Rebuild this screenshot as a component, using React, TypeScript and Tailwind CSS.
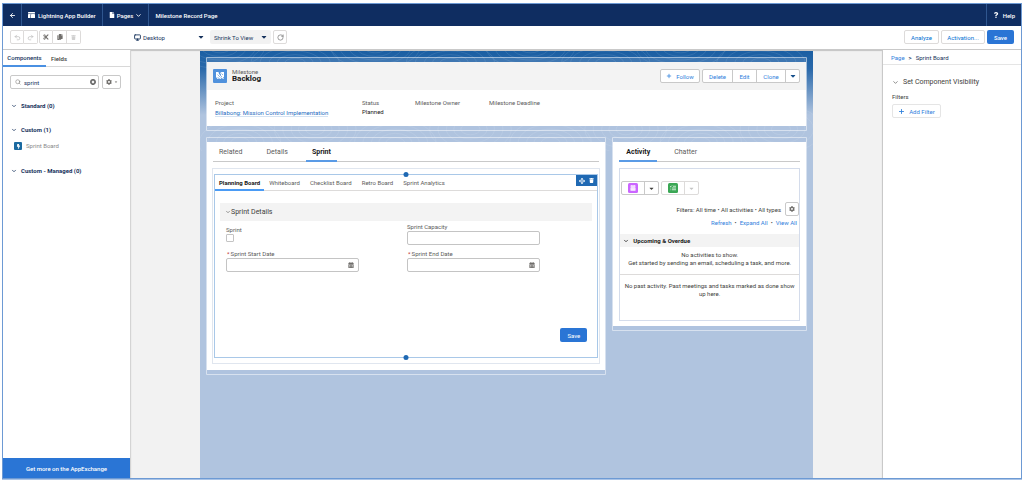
import type { ReactNode } from "react";
import {
  ArrowLeft,
  ChevronDown,
  Monitor,
  Plus,
  Redo2,
  RotateCw,
  Search,
  Undo2,
} from "lucide-react";
import {
  FaArrowsAlt,
  FaBolt,
  FaCalendarAlt,
  FaCaretDown,
  FaCog,
  FaCopy,
  FaCut,
  FaFile,
  FaQuestion,
  FaTimesCircle,
  FaTrash,
} from "react-icons/fa";

function LayoutIcon() {
  return (
    <svg viewBox="0 0 14 12" className="h-[6px] w-[7px]" fill="currentColor" aria-hidden="true">
      <rect x="0" y="0" width="14" height="3" rx="0.5" />
      <rect x="0" y="4" width="5" height="8" rx="0.5" />
      <rect x="6" y="4" width="8" height="8" rx="0.5" />
    </svg>
  );
}

function MilestoneIcon() {
  return (
    <svg viewBox="0 0 28 28" className="size-[14px] shrink-0" aria-hidden="true">
      <rect width="28" height="28" rx="2" fill="#5091dc" />
      <path
        d="M6 6h5l1 4 3 3 1-2-2-3 3-2h5v10l-2 1 2 2-2 1-3-3-1 3-4-1-3 1-3-4z"
        fill="#fff"
      />
      <path
        d="M9 11l6 6M17 9l3 3M9 16l3 3M14 12l4 4"
        fill="none"
        stroke="#5091dc"
        strokeWidth="1.3"
      />
    </svg>
  );
}

function EventIcon() {
  return (
    <svg viewBox="0 0 20 20" className="size-[10px]" aria-hidden="true">
      <rect width="20" height="20" rx="3" fill="#cb65ff" />
      <path d="M5 5h2V4h1.500v1h3V4H13v1h2v2.500H5z" fill="#fff" />
      <rect x="5" y="8.500" width="10" height="7" rx="1" fill="#fff" />
      <path d="M7 11h6M7 13.500h6" stroke="#cb65ff" strokeWidth="0.8" strokeDasharray="1.500 1" />
    </svg>
  );
}

function TaskIcon() {
  return (
    <svg viewBox="0 0 20 20" className="size-[10px]" aria-hidden="true">
      <rect width="20" height="20" rx="3" fill="#3ba755" />
      <path
        d="M4 6l1.500 1.500L8 5M10 6.500h6M8 10h8M8 13.500h8M5 10h1.500M5 13.500h1.500"
        fill="none"
        stroke="#fff"
        strokeWidth="1.500"
      />
    </svg>
  );
}

function Contours() {
  const centers = [20, 95, 175, 250, 330, 405, 480, 560];
  return (
    <svg
      viewBox="0 0 612 100"
      preserveAspectRatio="xMidYMin slice"
      className="absolute inset-x-0 top-0 h-[100px] w-full"
      fill="none"
      stroke="#fff"
      strokeOpacity="0.16"
      strokeWidth="0.6"
      aria-hidden="true"
    >
      {centers.map((c, i) =>
        [8, 14, 20, 27, 34].map((r) => (
          <g key={`${c}-${r}`}>
            <ellipse cx={c} cy={i % 2 ? 12 : -3} rx={r * 1.3} ry={r * 0.6} />
            <ellipse cx={c + 20} cy={i % 2 ? 78 : 92} rx={r * 1.2} ry={r * 0.7} />
          </g>
        )),
      )}
    </svg>
  );
}

function Region({ children, className = "" }: { children: ReactNode; className?: string }) {
  return (
    <section className={`rounded-[1px] border border-white/50 bg-[#b0c4df]/20 py-[4px] ${className}`}>
      <div className="bg-white">{children}</div>
    </section>
  );
}

function ToolButton({
  label,
  children,
  className = "",
  disabled = false,
}: {
  label: string;
  children: ReactNode;
  className?: string;
  disabled?: boolean;
}) {
  return (
    <button
      aria-label={label}
      disabled={disabled}
      className={`flex h-[14px] w-[14px] items-center justify-center border border-[#dddbda] bg-white ${className}`}
    >
      {children}
    </button>
  );
}

function Field({
  id,
  label,
  required = false,
  date = false,
}: {
  id: string;
  label: string;
  required?: boolean;
  date?: boolean;
}) {
  return (
    <div className="w-[133px]">
      <label htmlFor={id} className="flex gap-px leading-[8px] text-[#5c5c5c]">
        {required && <span className="pl-px text-[#c23934]">*</span>}
        {label}
      </label>
      <div className="relative">
        <input
          id={id}
          type="text"
          className="block h-[14px] w-full rounded-[2px] border border-[#c4c4c4] bg-white px-[4px] outline-none"
        />
        {date && (
          <button
            aria-label={`Pick ${label}`}
            className="absolute right-[5px] top-[4px] text-[#706e6b]"
          >
            <FaCalendarAlt size={6} />
          </button>
        )}
      </div>
    </div>
  );
}

function PaletteHeading({ children }: { children: ReactNode }) {
  return (
    <h2>
      <button className="flex items-center gap-[4px] font-bold leading-[8px] text-[#16325c]">
        <ChevronDown size={6} strokeWidth={3} />
        {children}
      </button>
    </h2>
  );
}

function Header() {
  return (
    <header className="flex h-[22px] items-stretch bg-[#0f2d61] font-medium text-white">
      <button aria-label="Back" className="flex w-[19px] items-center justify-center border-r border-[#2f568f]">
        <ArrowLeft size={7} strokeWidth={3} />
      </button>
      <a href="#builder" className="flex items-center gap-[3px] border-r border-[#2f568f] px-[6px]">
        <LayoutIcon />
        Lightning App Builder
      </a>
      <button className="flex items-center gap-[2px] border-r border-[#2f568f] px-[6px]">
        <FaFile size={6} />
        Pages
        <ChevronDown size={7} strokeWidth={3} />
      </button>
      <h1 className="flex items-center px-[6px]">Milestone Record Page</h1>
      <a href="#help" className="ml-auto flex items-center gap-[4px] border-l border-[#2f568f] px-[6px]">
        <FaQuestion size={6} />
        Help
      </a>
    </header>
  );
}

function Toolbar() {
  return (
    <div className="flex items-center border-b border-[#c9c9c9] bg-white px-[7px] pb-[5px] pt-[4px] text-[#16325c]">
      <div className="flex">
        <ToolButton label="Undo" disabled className="rounded-l-[2px] text-[#b0b0b0]">
          <Undo2 size={7} />
        </ToolButton>
        <ToolButton label="Redo" disabled className="rounded-r-[2px] border-l-0 text-[#b0b0b0]">
          <Redo2 size={7} />
        </ToolButton>
      </div>
      <div className="ml-px flex">
        <ToolButton label="Cut" className="rounded-l-[2px] border-[#c4c4c4] text-[#706e6b]">
          <FaCut size={6} />
        </ToolButton>
        <ToolButton label="Copy" className="border-l-0 border-[#c4c4c4] text-[#706e6b]">
          <FaCopy size={6} />
        </ToolButton>
        <ToolButton label="Delete" disabled className="rounded-r-[2px] border-l-0 text-[#d0d0d0]">
          <FaTrash size={5} />
        </ToolButton>
      </div>
      <div className="relative ml-[50px] flex w-[77px] items-center">
        <Monitor size={7} strokeWidth={3} className="pointer-events-none absolute left-[3px]" />
        <select
          aria-label="Form factor"
          className="h-[14px] w-full appearance-none bg-transparent pl-[12px] outline-none"
        >
          <option>Desktop</option>
        </select>
        <FaCaretDown size={8} className="pointer-events-none absolute right-[3px]" />
      </div>
      <div className="relative ml-[2px] flex w-[61px] items-center">
        <select
          aria-label="Zoom"
          className="h-[14px] w-full appearance-none rounded-[2px] bg-[#f2f2f2] pl-[4px] outline-none"
        >
          <option>Shrink To View</option>
        </select>
        <FaCaretDown size={8} className="pointer-events-none absolute right-[3px]" />
      </div>
      <ToolButton label="Refresh" className="ml-[2px] rounded-[2px] text-[#5c5c5c]">
        <RotateCw size={7} />
      </ToolButton>
      <div className="ml-auto flex gap-[2px] text-[#0070d2]">
        <button className="h-[14px] w-[35px] rounded-[2px] border border-[#dddbda]">Analyze</button>
        <button className="h-[14px] w-[44px] rounded-[2px] border border-[#dddbda]">Activation...</button>
        <button className="h-[14px] w-[27px] rounded-[2px] bg-[#2a75d5] font-medium text-white">Save</button>
      </div>
    </div>
  );
}

function Palette() {
  return (
    <aside className="flex w-[128px] shrink-0 flex-col border-r border-[#d4d4d4] bg-white">
      <nav className="flex h-[17px] border-b border-[#d8d8d8] font-medium text-[#3e3e3c]">
        <button className="-mb-px w-[43px] border-b-2 border-[#4a90e2] text-[#16325c]">Components</button>
        <button className="px-[5px]">Fields</button>
      </nav>
      <div className="flex gap-[3px] px-[7px] pt-[8px]">
        <div className="relative flex w-[89px] items-center">
          <Search size={6} className="absolute left-[5px] text-[#706e6b]" />
          <input
            aria-label="Search components"
            defaultValue="sprint"
            className="h-[14px] w-full rounded-[2px] border border-[#c9c9c9] pl-[13px] text-[#16325c] outline-none"
          />
          <button aria-label="Clear search" className="absolute right-[3px] text-[#5c5c5c]">
            <FaTimesCircle size={6} />
          </button>
        </div>
        <button
          aria-label="Settings"
          className="flex h-[14px] w-[19px] items-center justify-center gap-[2px] rounded-[2px] border border-[#c9c9c9] text-[#706e6b]"
        >
          <FaCog size={6} />
          <FaCaretDown size={4} />
        </button>
      </div>
      <div className="flex flex-col px-[8px] pt-[13px]">
        <PaletteHeading>Standard (0)</PaletteHeading>
        <div className="pb-[17px] pt-[16px]">
          <PaletteHeading>Custom (1)</PaletteHeading>
          <button className="mt-[8px] flex items-center gap-[4px] px-[3px] leading-[8px] text-[#8a8a8a]">
            <span className="flex size-[8px] items-center justify-center rounded-[1px] bg-[#1b6aa0] text-white">
              <FaBolt size={5} />
            </span>
            Sprint Board
          </button>
        </div>
        <PaletteHeading>Custom - Managed (0)</PaletteHeading>
      </div>
      <button className="mt-auto h-[20px] bg-[#2a75d5] font-medium text-white">
        Get more on the AppExchange
      </button>
    </aside>
  );
}

function RecordHeader() {
  return (
    <Region>
      <div className="flex h-[28px] items-center gap-[5px] bg-[#f3f3f3] px-[6px]">
        <MilestoneIcon />
        <div>
          <p className="leading-[6px] text-[#5c5c5c]">Milestone</p>
          <h2 className="text-[8px] font-bold leading-[8px] text-[#181818]">Backlog</h2>
        </div>
        <div className="ml-auto flex gap-[2px] text-[#2f80dc]">
          <button className="flex h-[14px] w-[40px] items-center justify-center gap-[4px] rounded-[2px] border border-[#c9c9c9] bg-white">
            <Plus size={6} strokeWidth={3} />
            Follow
          </button>
          <div className="flex h-[14px] divide-x divide-[#c9c9c9] rounded-[2px] border border-[#c9c9c9] bg-white">
            <button className="w-[30px]">Delete</button>
            <button className="w-[24px]">Edit</button>
            <button className="w-[29px]">Clone</button>
            <button aria-label="More actions" className="flex w-[13px] items-center justify-center text-[#16508c]">
              <FaCaretDown size={8} />
            </button>
          </div>
        </div>
      </div>
      <dl className="flex h-[36px] pl-[8px] pt-[9px] leading-[8px] text-[#5c5c5c]">
        <div className="w-[147px]">
          <dt>Project</dt>
          <dd className="mt-[2px]">
            <a href="#project" className="border-b border-[#d5e3f3] text-[#1f6dc2]">
              Billabong: Mission Control Implementation
            </a>
          </dd>
        </div>
        <div className="w-[53px]">
          <dt>Status</dt>
          <dd className="mt-px text-[#181818]">Planned</dd>
        </div>
        <div className="w-[74px]">
          <dt>Milestone Owner</dt>
        </div>
        <div>
          <dt>Milestone Deadline</dt>
        </div>
      </dl>
    </Region>
  );
}

function SprintBoard() {
  return (
    <div className="relative border border-[#a9c8e8]">
      <span className="absolute left-1/2 top-[-3px] size-[5px] -translate-x-1/2 rounded-full bg-[#1f69b3]" />
      <span className="absolute bottom-[-3px] left-1/2 size-[5px] -translate-x-1/2 rounded-full bg-[#1f69b3]" />
      <div className="absolute right-0 top-0 flex h-[11px] w-[21px] items-center justify-center gap-[4px] bg-[#1f69b3] text-white">
        <button aria-label="Move component">
          <FaArrowsAlt size={6} />
        </button>
        <button aria-label="Delete component">
          <FaTrash size={5} />
        </button>
      </div>
      <nav className="flex h-[16px] border-b border-[#dddbda] text-[#5c5c5c]">
        <button className="-mb-px border-b-2 border-[#4a9bf5] px-[4px] font-bold text-[#181818]">
          Planning Board
        </button>
        <button className="px-[5px]">Whiteboard</button>
        <button className="px-[5px]">Checklist Board</button>
        <button className="px-[5px]">Retro Board</button>
        <button className="px-[5px]">Sprint Analytics</button>
      </nav>
      <form className="px-[5px] pb-[15px] pt-[12px]" onSubmit={(e) => e.preventDefault()}>
        <h3 className="flex h-[18px] items-center bg-[#f3f3f3] px-[5px] text-[7px] text-[#3e3e3c]">
          <ChevronDown size={6} />
          Sprint Details
        </h3>
        <div className="flex gap-[48px] px-[6px] pt-[2px]">
          <div className="flex w-[133px] flex-col items-start pt-[3px]">
            <label htmlFor="sprint" className="leading-[8px] text-[#5c5c5c]">
              Sprint
            </label>
            <input
              id="sprint"
              type="checkbox"
              className="size-[8px] appearance-none rounded-[1px] border border-[#c4c4c4] bg-white checked:bg-[#2a75d5]"
            />
          </div>
          <Field id="capacity" label="Sprint Capacity" />
        </div>
        <div className="flex gap-[48px] px-[6px] pt-[5px]">
          <Field id="start" label="Sprint Start Date" required date />
          <Field id="end" label="Sprint End Date" required date />
        </div>
        <div className="flex justify-end px-[5px] pt-[56px]">
          <button className="h-[14px] w-[27px] rounded-[2px] bg-[#2a75d5] text-white">Save</button>
        </div>
      </form>
    </div>
  );
}

function MainTabs() {
  return (
    <Region className="flex-[401]">
      <div className="px-[5px] pb-[6px]">
        <nav className="mx-px flex h-[20px] gap-[12px] border-b border-[#c9c9c9] text-[7px] text-[#5c5c5c]">
          <button className="px-[6px] pt-[2px]">Related</button>
          <button className="px-[6px] pt-[2px]">Details</button>
          <button className="-mb-px border-b-2 border-[#5a9be6] px-[6px] pt-[2px] font-bold text-[#181818]">
            Sprint
          </button>
        </nav>
        <div className="mt-[6px] border border-[#e0e6ef] px-px py-[5px]">
          <SprintBoard />
        </div>
      </div>
    </Region>
  );
}

function ActivityPanel() {
  return (
    <Region className="flex-[194]">
      <div className="px-[6px] pb-[5px]">
        <nav className="flex h-[20px] gap-[12px] border-b border-[#c9c9c9] text-[7px] text-[#5c5c5c]">
          <button className="-mb-px border-b-2 border-[#5a9be6] px-[7px] pt-[2px] font-bold text-[#181818]">
            Activity
          </button>
          <button className="px-[5px] pt-[2px]">Chatter</button>
        </nav>
        <div className="mt-[6px] border border-[#d4dceb] pb-[22px] pt-[12px] text-[#3e3e3c]">
          <div className="flex gap-[2px] px-px">
            <div className="flex h-[14px] divide-x divide-[#c9c9c9] rounded-[2px] border border-[#c9c9c9]">
              <button aria-label="New event" className="flex w-[23px] items-center justify-center">
                <EventIcon />
              </button>
              <button aria-label="Event actions" className="flex w-[13px] items-center justify-center">
                <FaCaretDown size={7} />
              </button>
            </div>
            <div className="flex h-[14px] divide-x divide-[#dddbda] rounded-[2px] border border-[#dddbda]">
              <button aria-label="New task" className="flex w-[23px] items-center justify-center">
                <TaskIcon />
              </button>
              <button aria-label="Task actions" disabled className="flex w-[13px] items-center justify-center text-[#c4c4c4]">
                <FaCaretDown size={7} />
              </button>
            </div>
          </div>
          <div className="mt-[7px] flex items-center justify-end gap-[4px]">
            <p>Filters: All time • All activities • All types</p>
            <button
              aria-label="Filter settings"
              className="flex size-[14px] items-center justify-center rounded-[2px] border border-[#c9c9c9] text-[#706e6b]"
            >
              <FaCog size={6} />
            </button>
          </div>
          <p className="mt-[3px] flex justify-end gap-[3px] pr-[2px] leading-[8px]">
            <a href="#refresh" className="text-[#2f80dc]">Refresh</a>•
            <a href="#expand" className="text-[#2f80dc]">Expand All</a>•
            <a href="#view" className="text-[#2f80dc]">View All</a>
          </p>
          <h3 className="mt-[7px]">
            <button className="flex h-[13px] w-full items-center gap-[4px] bg-[#f3f3f3] px-[3px] font-bold text-[#181818]">
              <ChevronDown size={6} strokeWidth={3} />
              Upcoming &amp; Overdue
            </button>
          </h3>
          <div className="border-b border-[#dddbda] pb-[7px] pt-[4px] text-center leading-[8px]">
            <p>No activities to show.</p>
            <p>Get started by sending an email, scheduling a task, and more.</p>
          </div>
          <p className="px-px pt-[7px] text-center leading-[8px]">
            No past activity. Past meetings and tasks marked as done show up here.
          </p>
        </div>
      </div>
    </Region>
  );
}

function Properties() {
  return (
    <aside className="w-[139px] shrink-0 border-l border-[#c9c9c9] bg-white">
      <nav className="flex h-[15px] items-center gap-[4px] border-b border-[#e5e5e5] px-[8px] text-[#16325c]">
        <a href="#page" className="text-[#2f80dc]">Page</a>
        <span className="font-bold">&gt;</span>
        <span>Sprint Board</span>
      </nav>
      <div className="px-[9px] pt-[13px]">
        <h2>
          <button className="flex items-center gap-[4px] text-[7px] leading-[8px] text-[#3e3e3c]">
            <ChevronDown size={7} />
            Set Component Visibility
          </button>
        </h2>
        <p className="mt-[7px] leading-[8px] text-[#3e3e3c]">Filters</p>
        <button className="mt-[3px] flex h-[14px] w-[49px] items-center justify-center gap-[4px] rounded-[2px] border border-[#e5e5e5] text-[#2f80dc]">
          <Plus size={7} strokeWidth={3} />
          Add Filter
        </button>
      </div>
    </aside>
  );
}

export default function App() {
  return (
    <div className="flex min-h-screen flex-col bg-white p-[2px] py-[3px] font-['Roboto',sans-serif] text-[6px]">
      <div className="flex flex-1 flex-col border border-[#6d9ad4] shadow-[0_1px_0_#a9c3e6]">
        <Header />
        <Toolbar />
        <div className="flex flex-1">
          <Palette />
          <main className="flex flex-1 bg-[#f2f2f2] px-[69px] pt-px shadow-[inset_0_1px_1px_#c4c4c4]">
            <div className="relative flex-1 bg-[#b0c4df] bg-[linear-gradient(#1b5fa3_0px,#2a69aa_18px,#b0c4df_64px)] bg-no-repeat">
              <Contours />
              <div className="relative flex flex-col gap-[6px] p-[6px]">
                <RecordHeader />
                <div className="flex items-start gap-[6px]">
                  <MainTabs />
                  <ActivityPanel />
                </div>
              </div>
            </div>
          </main>
          <Properties />
        </div>
      </div>
    </div>
  );
}
